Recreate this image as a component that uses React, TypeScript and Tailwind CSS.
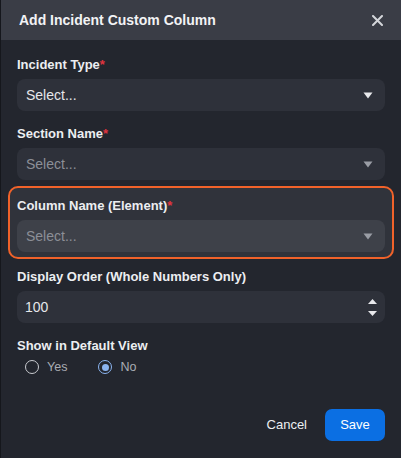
import React from "react";

const Caret = ({ dim }: { dim?: boolean }) => (
  <svg width="10" height="7" viewBox="0 0 10 7" className={dim ? "text-[#9a9da5]" : "text-[#e8e9ec]"}>
    <path d="M0.5 0.5h9L5 6.5z" fill="currentColor" />
  </svg>
);

const Label = ({ text, required }: { text: string; required?: boolean }) => (
  <p className="text-[13px] font-bold leading-[16px] text-[#eceef1]">
    {text}
    {required && <span className="text-[#e0343f]">*</span>}
  </p>
);

const SelectBox = ({ dim, bg }: { dim?: boolean; bg: string }) => (
  <div className={`mt-[6px] flex h-[32px] items-center justify-between rounded-[8px] pl-[9px] pr-[12px] ${bg}`}>
    <span className={`text-[14px] ${dim ? "text-[#8c8f97]" : "text-[#e6e7ea]"}`}>Select...</span>
    <Caret dim={dim} />
  </div>
);

const Radio = ({ label, checked }: { label: string; checked?: boolean }) => (
  <label className="flex items-center gap-[8px]">
    <span
      className={`flex h-[14px] w-[14px] items-center justify-center rounded-full border-[1.5px] ${
        checked ? "border-[#8ab4f0]" : "border-[#c9cbd0]"
      }`}
    >
      {checked && <span className="h-[7px] w-[7px] rounded-full bg-[#8ab4f0]" />}
    </span>
    <span className="text-[12.5px] text-[#a9acb3]">{label}</span>
  </label>
);

const App = () => {
  return (
    <div
      className="h-[458px] w-[401px] overflow-hidden border-l border-[#15171c] bg-[#23262e]"
      style={{ fontFamily: '"Liberation Sans", Arial, sans-serif' }}
    >
      <div className="flex h-[40px] items-center justify-between bg-[#3a3d46] pl-[18px] pr-[18px]">
        <h2 className="text-[14px] font-bold text-[#f2f3f5]">Add Incident Custom Column</h2>
        <svg width="11" height="11" viewBox="0 0 11 11">
          <path d="M1 1l9 9M10 1l-9 9" stroke="#d4d6da" strokeWidth="2" strokeLinecap="round" />
        </svg>
      </div>

      <div className="flex flex-col px-[16px] pt-[17px]">
        <Label text="Incident Type" required />
        <SelectBox bg="bg-[#2e313a]" />

        <div className="mt-[15px]">
          <Label text="Section Name" required />
          <SelectBox dim bg="bg-[#2e313a]" />
        </div>

        <div className="-mx-[9px] mt-[6px] rounded-[10px] border-2 border-[#f0622a] bg-[#30333b] px-[7px] pb-[5px] pt-[10px]">
          <Label text="Column Name (Element)" required />
          <SelectBox dim bg="bg-[#3e4149]" />
        </div>

        <div className="mt-[10px]">
          <Label text="Display Order (Whole Numbers Only)" />
          <div className="mt-[6px] flex h-[32px] items-center justify-between rounded-[8px] bg-[#2e313a] pl-[8px] pr-[8px]">
            <span className="text-[14px] text-[#e6e7ea]">100</span>
            <div className="flex flex-col gap-[7px]">
              <svg width="9" height="5" viewBox="0 0 9 5">
                <path d="M0 5h9L4.5 0z" fill="#e8e9ec" />
              </svg>
              <svg width="9" height="5" viewBox="0 0 9 5">
                <path d="M0 0h9L4.5 5z" fill="#e8e9ec" />
              </svg>
            </div>
          </div>
        </div>

        <div className="mt-[15px]">
          <Label text="Show in Default View" />
          <div className="mt-[4px] flex items-center gap-[31px] pl-[8px]">
            <Radio label="Yes" />
            <Radio label="No" checked />
          </div>
        </div>

        <div className="mt-[32px] flex items-center justify-end gap-[18px]">
          <button className="text-[13px] text-[#eceef1]">Cancel</button>
          <button className="h-[32px] w-[60px] rounded-[7px] bg-[#0b6fe3] text-[13px] text-white">Save</button>
        </div>
      </div>
    </div>
  );
};

export default App;
